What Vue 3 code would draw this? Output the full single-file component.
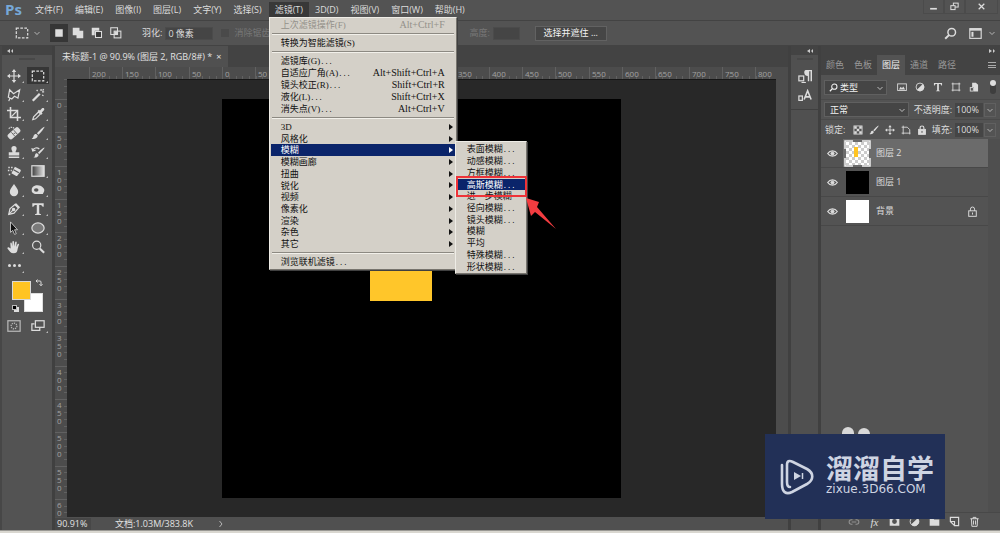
<script setup>
const menusBefore = ['文件(F)', '编辑(E)', '图像(I)', '图层(L)', '文字(Y)', '选择(S)']
const menusAfter = ['3D(D)', '视图(V)', '窗口(W)', '帮助(H)']

const filterCommands = [
  { label: '滤镜库(G)', keys: '' },
  { label: '自适应广角(A)', keys: 'Alt+Shift+Ctrl+A' },
  { label: '镜头校正(R)', keys: 'Shift+Ctrl+R' },
  { label: '液化(L)', keys: 'Shift+Ctrl+X' },
  { label: '消失点(V)', keys: 'Alt+Ctrl+V' },
]
const filterGroups = ['3D', '风格化', '模糊', '模糊画廊', '扭曲', '锐化', '视频', '像素化', '渲染', '杂色', '其它']
const blurs = [
  { label: '表面模糊', dots: true },
  { label: '动感模糊', dots: true },
  { label: '方框模糊', dots: true },
  { label: '高斯模糊', dots: true, active: true },
  { label: '进一步模糊' },
  { label: '径向模糊', dots: true },
  { label: '镜头模糊', dots: true },
  { label: '模糊' },
  { label: '平均' },
  { label: '特殊模糊', dots: true },
  { label: '形状模糊', dots: true },
]

const F = 'fill="currentColor"'
const FN = 'fill="currentColor" stroke="none"'
const icons = {
  move: `<path d="M8 2v12M2 8h12"/><path ${FN} d="M8 0l2.6 3.4H5.4zM8 16l2.6-3.4H5.4zM0 8l3.4-2.6v5.2zM16 8l-3.4-2.6v5.2z"/>`,
  marquee: '<rect x="1.5" y="2.5" width="13" height="11" stroke-dasharray="3 1.6"/>',
  lasso: '<path d="M3 2l4.5 4.5L14.5 2 12.5 11.5 8.5 9.5 5.5 12.5 1.5 10.5zM3.5 11.5L2 15"/>',
  wand: `<path stroke-width="2.6" d="M2 14.5L10 6.5"/><path d="M11.5 1v2.4M15 4.5h-2.4M6.5 2.2l1 1.4M14.3 8.8l-1.6-.8M14.6 1.4l-1.4 1.4"/>`,
  crop: '<path stroke-width="1.8" d="M4 0v12h12M0 4h12v12"/><path d="M5 11L12 4"/>',
  dropper: `<path d="M2 14.5l1-3.2 5.6-5.6 2.2 2.2-5.6 5.6z"/><path ${FN} d="M7.5 4.5l1.6-1.4 1.2 1 2-2.4c2-1.6 4 .4 2.2 2.3l-2.2 2.2.9 1.2-1.4 1.5z"/>`,
  heal: `<path d="M2 3c3-3 6-1 7 1" stroke-dasharray="1.5 1"/><rect x="0" y="4.8" width="16" height="7" rx="2.4" ${FN} transform="rotate(-42 8 8.3)"/><path stroke="#535353" stroke-width="1" d="M5 7.200l4 4.600M7.800 4.800l4 4.600M7.600 8.400h1.800"/>`,
  brush: `<path ${FN} d="M15.4.8c.6.6-4.6 7.4-7 9.2L6.8 8.4C8.6 6 14.8.2 15.4.8zM6 9.2l1.7 1.7c0 3-3.7 4.6-7 3.6 2-.8 1.8-2 2.4-3.6.5-1.3 1.7-2 2.9-1.7z"/>`,
  stamp: `<path ${FN} d="M5 4a3 3 0 116 0c0 1.8-1.2 2.6-1.2 4.4H14V12H2V8.400h4.200C6.200 6.600 5 5.800 5 4zM2 13.200h12v1.600H2z"/>`,
  history: `<path ${FN} d="M15.400 2.800c.6.600-3.600 5.600-6 7.400L8 8.800c1.800-2.400 6.800-6.600 7.400-6zM7.200 9.600l1.500 1.500c0 2.600-3 3.800-6 3 2-.8 1.500-2 2-3.100.5-1.100 1.500-1.600 2.500-1.400z"/><path d="M2 6.500C3 3 7 2.400 9.500 4.500M1 3.500l1 3.400 3.200-1"/>`,
  eraser: `<path ${FN} d="M9 3l6 3.200c.8.500 1 1.200.6 2L12 13c-.5.700-1.300.8-2 .400L5 10.500z"/><path stroke="#535353" d="M7.500 6.500l6 3.500"/><path stroke-dasharray="1.700 1.500" stroke-width="1.800" d="M1.500 4h6M1 7.500h4.500M2 12h3"/>`,
  gradient: '<defs><linearGradient id="toolGradient"><stop offset="0" stop-color="#3c3c3c"/><stop offset="1" stop-color="#e4e4e4"/></linearGradient></defs><rect x="1" y="2" width="14" height="12" fill="url(#toolGradient)"/>',
  drop: `<path ${FN} d="M8 1c2.500 4 4.800 6 4.800 9.200a4.800 4.800 0 01-9.600 0C3.200 7 5.500 5 8 1z"/>`,
  sponge: `<path ${FN} d="M2 4.500C5 1.500 12 2 14.800 6.500c1.200 2-.3 4.500-1.300 6H9.500C5 13 .8 12 .8 8.500c0-1.700.2-3 1.200-4z"/><ellipse cx="6" cy="8" rx="2.600" ry="2" fill="#535353" stroke="none"/>`,
  pen: `<path d="M2 14.200l1.400-6.400L9 3l4 4-5 5.700z"/><path d="M9.500 2l4.700 4.600" stroke-width="2"/><path d="M2.500 13.500l4-4"/><circle cx="7.500" cy="8.500" r="1.300" ${F}/>`,
  type: `<path ${FN} d="M1.500 1.500h13v4h-1.300c-.3-1.700-.9-2.200-3.800-2.200v9.400c0 .9.500 1 1.900 1.100v1H4.700v-1c1.400-.1 1.900-.2 1.900-1.100V3.300c-2.900 0-3.500.5-3.800 2.200H1.500z"/>`,
  arrow: '<path fill="#111" stroke="#ddd" stroke-width=".9" d="M4 1l8 9H8.600l2 4.500-2 .8-2-4.600L4 13z"/>',
  ellipse: '<ellipse cx="8" cy="8" rx="7" ry="5.800" fill="#7a7a7a"/>',
  hand: `<path ${FN} d="M4.200 9.800L3.800 4c-.1-1.300 1.500-1.400 1.700-.1l.6 3.600L6.200 2c0-1.300 1.700-1.300 1.800 0l.4 5.300 1-4.900c.3-1.200 1.900-.9 1.700.400L10.500 8l1.700-3.300c.6-1.100 2-.4 1.500.8-1 2.700-1.300 4-1.800 6.200-.4 2-1.400 3.500-4.300 3.500-3.500 0-4.500-2.200-6.900-5.300-.8-1.200.7-2.100 1.700-1.200z"/>`,
  zoom: '<circle cx="6.500" cy="6" r="4.700"/><path stroke-width="2.400" d="M10 9.700l5 5"/>',
  search: '<circle cx="9.500" cy="6.500" r="4.700" stroke-width="1.800"/><path stroke-width="2.400" d="M6 10l-4.500 4.500"/>',
  chevron: '<path d="M3 6l5 5 5-5"/>',
  solid: `<rect x="3" y="3" width="10" height="10" ${FN}/>`,
  union: `<path ${FN} d="M1 1h9v4h5v10H6v-4H1z"/>`,
  subtract: `<path ${FN} d="M1 1h10v4H5v6H1z"/><rect x="6" y="6" width="8" height="8" fill="#383838"/>`,
  intersect: `<rect x="1" y="1" width="9" height="9"/><rect x="5.500" y="5.500" width="9" height="9"/><rect x="6.500" y="6.500" width="3" height="3" ${F}/>`,
  workspace: `<rect x="1" y="2" width="14" height="12"/><path d="M1 3.500h14" stroke-width="2"/><rect x="3" y="6" width="2.500" height="6" ${FN}/>`,
  para: `<path ${FN} d="M9 1h7v13h-1.700V2.500h-1.500V14h-1.600V8C6.500 8 6 1 9 1z"/><rect x="1" y="8" width="5.500" height="5.500"/><path d="M4 15.500h5"/>`,
  char: `<path stroke-width="1.800" d="M7 12L11 2l4 10M8.500 9h5"/><rect x="1" y="8" width="4" height="5"/>`,
  image: `<rect x="1" y="3" width="14" height="10.500"/><path ${FN} d="M3 12l3-4.500 2 2.500 2-3 3 5z"/>`,
  adjust: `<circle cx="8" cy="8" r="6.300"/><path ${FN} d="M12.500 3.500A6.300 6.300 0 013.500 12.500z"/><path ${FN} d="M3.500 12.500a6.300 6.300 0 009-9z"/>`,
  shape: `<path d="M3 1v14M13 1v14M1 3h14M1 13h14"/>`,
  smart: `<path ${FN} d="M5 1h6l3.500 3.500V15H8V8H5z"/><rect x="2" y="9" width="5" height="5.500"/>`,
  checker: `<rect x="1.500" y="1.500" width="13" height="13"/><path ${FN} d="M2 2h4v4H2zM10 2h4v4h-4zM6 6h4v4H6zM2 10h4v4H2zM10 10h4v4h-4z"/>`,
  artboard: `<path d="M3.500 1v14M1 3.500h9l4 4V15M1 13h14"/>`,
  lock: `<rect x="2.500" y="7" width="11" height="8" ${F}/><path stroke-width="1.800" d="M5 7V4.500a3 3 0 016 0V7"/><path stroke="#444" d="M8 9.500v3"/>`,
  lockOpen: `<rect x="2.500" y="7" width="11" height="8"/><path d="M5 7V4.500a3 3 0 016 0V7M8 9.500v3"/>`,
  eye: `<path stroke-width="1.800" d="M1 8c3.500-5.300 10.500-5.300 14 0-3.500 5.300-10.500 5.300-14 0z"/><circle cx="8" cy="8" r="2.300" ${F}/>`,
  link: '<path d="M6 5H4.500a3 3 0 000 6H6M10 5h1.500a3 3 0 010 6H10M5 8h6"/>',
  mask: `<path ${FN} fill-rule="evenodd" d="M1 2h14v12H1zM8 4.500a3.500 3.500 0 100 7 3.500 3.500 0 000-7z"/>`,
  folder: `<path ${FN} d="M1 3h5l1.500 2H15v9H1z"/>`,
  newLayer: '<path stroke-width="1.700" d="M2 2h12v12H8V8H2zM8 14L2 8"/>',
  trash: '<path d="M2 4h12M6 4V2h4v2M3.500 4l.7 11h7.600l.7-11M6.500 6.500v6M9.500 6.500v6"/>',
  quickMask: '<rect x="1" y="2" width="14" height="12"/><circle cx="8" cy="8" r="3.300" stroke-dasharray="1.500 1"/>',
  screen: '<rect x="5" y="2" width="10" height="7.500"/><path d="M4 5.500H1V13h9v-3"/>',
  swap: '<path stroke-width="2" d="M2 4h8a2 2 0 012 2v7M5 1L2 4l3 3M9 10.500l3 3 3-3"/>',
  minimize: '<path stroke-width="3" d="M2 12h12"/>',
  restore: '<rect x="6" y="2" width="8.500" height="7" stroke-width="1.800"/><rect x="1.500" y="6.500" width="7.500" height="7" fill="#535353" stroke-width="1.800"/>',
  close: '<path stroke-width="2.200" d="M3 3l10 10M13 3L3 13"/>',
}

const tools = [
  ['move', '移动'], ['marquee', '矩形选框'], ['lasso', '多边形套索'], ['wand', '魔棒'],
  ['crop', '裁剪'], ['dropper', '吸管'], ['heal', '修复画笔'], ['brush', '画笔'],
  ['stamp', '仿制图章'], ['history', '历史记录画笔'], ['eraser', '橡皮擦'], ['gradient', '渐变'],
  ['drop', '模糊'], ['sponge', '海绵'], ['pen', '钢笔'], ['type', '文字'],
  ['arrow', '路径选择'], ['ellipse', '椭圆'], ['hand', '抓手'], ['zoom', '缩放'],
]

// Labels under the open menu are left out.
const step = 100 / 3
const hMarks = Array.from({ length: 21 }, (_, i) => (i - 4) * 50)
  .filter((v) => v <= 50 || v >= 350)
  .map((v) => ({ x: Math.round(155 + (v / 50) * step), text: String(Math.abs(v)) }))
const vMarks = Array.from({ length: 13 }, (_, i) => ({ y: Math.round(20 + i * step), digits: String(i * 50).split('').slice(0, i === 12 ? 2 : 3) }))
const hMinor = Array.from({ length: 106 }, (_, i) => Math.round(22 + (i * step) / 5))
const vMinor = Array.from({ length: 66 }, (_, i) => Math.round(i * step / 5))

const panelTabs = ['颜色', '色板', '图层', '通道', '路径']
const layers = [
  { name: '图层 2', thumb: 'clear', selected: true },
  { name: '图层 1', thumb: 'black' },
  { name: '背景', thumb: 'white', locked: true },
]
</script>

<template>
  <div class="app">
    <header class="menubar">
      <span class="brand">Ps</span>
      <nav class="menus">
        <button v-for="m in menusBefore" :key="m" class="menu-button">{{ m }}</button>
        <div class="menu-open">
          <button class="menu-button current" aria-expanded="true">滤镜(T)</button>
          <div class="popup filter-menu">
            <button class="item" disabled><span>上次滤镜操作(F)</span><kbd>Alt+Ctrl+F</kbd></button>
            <hr />
            <button class="item"><span>转换为智能滤镜(S)</span></button>
            <hr />
            <div class="rows commands">
              <button v-for="c in filterCommands" :key="c.label" class="item">
                <span>{{ c.label }}<span class="dots">...</span></span><kbd>{{ c.keys }}</kbd>
              </button>
            </div>
            <hr />
            <div class="rows groups">
              <div v-for="g in filterGroups" :key="g" class="entry">
                <button class="item has-sub" :class="{ active: g === '模糊' }"><span>{{ g }}</span><i class="tri"></i></button>
                <div v-if="g === '模糊'" class="popup blur-menu">
                  <div class="rows groups">
                    <button v-for="b in blurs" :key="b.label" class="item" :class="{ active: b.active }">
                      <span>{{ b.label }}<span v-if="b.dots" class="dots">...</span></span>
                    </button>
                  </div>
                  <div class="callout"></div>
                  <svg class="pointer" viewBox="0 0 30 32" aria-hidden="true"><path d="M0 0L13 4 11 9 30 31 9 14 5 18z" fill="#f23c40" /></svg>
                </div>
              </div>
            </div>
            <hr />
            <button class="item"><span>浏览联机滤镜<span class="dots">...</span></span></button>
          </div>
        </div>
        <button v-for="m in menusAfter" :key="m" class="menu-button">{{ m }}</button>
      </nav>
      <div class="window-buttons">
        <button aria-label="最小化"><svg class="ic s9" viewBox="0 0 16 16" v-html="icons.minimize"></svg></button>
        <button aria-label="还原"><svg class="ic s9" viewBox="0 0 16 16" v-html="icons.restore"></svg></button>
        <button class="wide" aria-label="关闭"><svg class="ic s9" viewBox="0 0 16 16" v-html="icons.close"></svg></button>
      </div>
    </header>

    <div class="options">
      <button class="tool-preset" aria-label="工具预设">
        <svg class="ic s14" viewBox="0 0 16 16" v-html="icons.marquee"></svg>
        <svg class="ic s8" viewBox="0 0 16 16" v-html="icons.chevron"></svg>
      </button>
      <div class="modes">
        <button class="on" aria-label="新选区"><svg class="ic s12" viewBox="0 0 16 16" v-html="icons.solid"></svg></button>
        <button aria-label="添加到选区"><svg class="ic s12" viewBox="0 0 16 16" v-html="icons.union"></svg></button>
        <button aria-label="从选区减去"><svg class="ic s12" viewBox="0 0 16 16" v-html="icons.subtract"></svg></button>
        <button aria-label="与选区交叉"><svg class="ic s12" viewBox="0 0 16 16" v-html="icons.intersect"></svg></button>
      </div>
      <div class="field feather"><label for="feather">羽化:</label><input id="feather" value="0 像素" /></div>
      <label class="smooth"><input type="checkbox" disabled />消除锯齿</label>
      <div class="field height"><label for="height">高度:</label><input id="height" disabled /></div>
      <button class="select-mask">选择并遮住 ...</button>
      <div class="right-tools">
        <button aria-label="搜索"><svg class="ic s13" viewBox="0 0 16 16" v-html="icons.search"></svg></button>
        <button class="workspace-pick" aria-label="工作区">
          <svg class="ic s13" viewBox="0 0 16 16" v-html="icons.workspace"></svg>
          <svg class="ic s8" viewBox="0 0 16 16" v-html="icons.chevron"></svg>
        </button>
      </div>
    </div>

    <main class="workspace">
      <aside class="toolbox">
        <div class="dock-head"><svg class="collapse" viewBox="0 0 6 4"><path d="M3 0v4L0 2zM6 0v4L4 2z" /></svg></div>
        <div class="grip"></div>
        <div class="tools">
          <button v-for="([key, name], i) in tools" :key="name" :aria-label="name" :class="{ on: key === 'marquee', corner: i < 19 }">
            <svg class="ic s14" viewBox="0 0 16 16" v-html="icons[key]"></svg>
          </button>
          <button class="more corner" aria-label="编辑工具栏"><i></i><i></i><i></i></button>
        </div>
        <div class="swatches">
          <button class="back" aria-label="背景色"></button>
          <button class="fore" aria-label="前景色"></button>
          <button class="swap" aria-label="切换颜色"><svg class="ic s8" viewBox="0 0 16 16" v-html="icons.swap"></svg></button>
          <button class="reset" aria-label="默认颜色"></button>
        </div>
        <div class="tools view-tools">
          <button aria-label="快速蒙版"><svg class="ic s14 dim" viewBox="0 0 16 16" v-html="icons.quickMask"></svg></button>
          <button class="corner" aria-label="屏幕模式"><svg class="ic s14" viewBox="0 0 16 16" v-html="icons.screen"></svg></button>
        </div>
      </aside>

      <section class="document">
        <div class="tabbar"><div class="tab">未标题-1 @ 90.9% (图层 2, RGB/8#) * <button aria-label="关闭文档">×</button></div></div>
        <div class="stage">
          <div class="corner-box"></div>
          <div class="ruler">
            <svg>
              <path v-for="x in hMinor" :key="'m' + x" :d="`M${x} 9v3`" />
              <g v-for="m in hMarks" :key="m.x"><path :d="`M${m.x} 0v12`" /><text :x="m.x + 3" y="10">{{ m.text }}</text></g>
            </svg>
          </div>
          <div class="ruler-end"></div>
          <div class="ruler">
            <svg>
              <path v-for="y in vMinor" :key="'m' + y" :d="`M9 ${y}h3`" />
              <g v-for="m in vMarks" :key="m.y"><path :d="`M0 ${m.y}h12`" /><text v-for="(d, i) in m.digits" :key="i" x="2" :y="m.y + 9 + i * 8">{{ d }}</text></g>
            </svg>
          </div>
          <div class="canvas"><div class="artwork"><div class="square"></div></div></div>
          <div class="scrollbar"></div>
        </div>
        <footer class="status"><span class="zoom-level">90.91%</span><span class="doc-size">文档:1.03M/383.8K</span><svg class="ic s8" viewBox="0 0 16 16"><path d="M5 2l5 6-5 6" /></svg></footer>
      </section>

      <aside class="icon-dock">
        <div class="dock-head end"><svg class="collapse" viewBox="0 0 6 4"><path d="M3 0v4L0 2zM6 0v4L4 2z" /></svg></div>
        <div class="grip"></div>
        <div class="dock-icons">
          <button aria-label="段落"><svg class="ic s14" viewBox="0 0 16 16" v-html="icons.para"></svg></button>
          <button aria-label="字符"><svg class="ic s14" viewBox="0 0 16 16" v-html="icons.char"></svg></button>
        </div>
      </aside>

      <aside class="panels">
        <div class="dock-head end"><svg class="collapse" viewBox="0 0 6 4"><path d="M0 0v4l3-2zM4 0v4l2-2z" /></svg></div>
        <div class="panel-tabs">
          <button v-for="t in panelTabs" :key="t" :class="{ on: t === '图层' }">{{ t }}</button>
          <button class="burger" aria-label="面板菜单"><i></i></button>
        </div>
        <div class="control-row">
          <div class="pick kind">
            <svg class="ic s9 lens" viewBox="0 0 16 16" v-html="icons.search"></svg>
            <select aria-label="滤镜类型"><option>类型</option></select>
            <svg class="ic s8 caret" viewBox="0 0 16 16" v-html="icons.chevron"></svg>
          </div>
          <div class="icon-set kinds">
            <button v-for="k in ['image', 'adjust', 'type', 'shape', 'smart']" :key="k" :aria-label="k"><svg class="ic s10" viewBox="0 0 16 16" v-html="icons[k]"></svg></button>
          </div>
          <button class="toggle" aria-label="打开图层过滤"></button>
        </div>
        <div class="control-row ruled">
          <div class="pick blend">
            <select aria-label="混合模式"><option>正常</option></select>
            <svg class="ic s8 caret" viewBox="0 0 16 16" v-html="icons.chevron"></svg>
          </div>
          <div class="percent">
            <label for="opacity">不透明度:</label><input id="opacity" value="100%" />
            <button aria-label="不透明度滑块"><svg class="ic s8" viewBox="0 0 16 16" v-html="icons.chevron"></svg></button>
          </div>
        </div>
        <div class="control-row ruled">
          <span class="lock-label">锁定:</span>
          <div class="icon-set locks">
            <button v-for="k in ['checker', 'brush', 'move', 'artboard', 'lock']" :key="k" :aria-label="'锁定 ' + k"><svg class="ic s10" viewBox="0 0 16 16" v-html="icons[k]"></svg></button>
          </div>
          <div class="percent">
            <label for="fill">填充:</label><input id="fill" value="100%" />
            <button aria-label="填充滑块"><svg class="ic s8" viewBox="0 0 16 16" v-html="icons.chevron"></svg></button>
          </div>
        </div>
        <ul class="layers">
          <li v-for="l in layers" :key="l.name" :class="{ selected: l.selected }">
            <button class="eye" aria-label="可见性"><svg class="ic s11" viewBox="0 0 16 16" v-html="icons.eye"></svg></button>
            <div class="layer-body">
              <div class="thumb" :class="l.thumb">
                <svg v-if="l.selected" class="bracket" viewBox="0 0 27 27"><path d="M1 9V1h8M18 1h8v8M26 18v8h-8M9 26H1v-8" /></svg>
                <i v-if="l.selected"></i>
              </div>
              <span class="layer-name">{{ l.name }}</span>
              <svg v-if="l.locked" class="ic s11 layer-lock" viewBox="0 0 16 16" v-html="icons.lockOpen"></svg>
            </div>
          </li>
        </ul>
        <div class="panel-space"></div>
        <div class="layer-actions">
          <button class="faint" aria-label="链接图层"><svg class="ic s12" viewBox="0 0 16 16" v-html="icons.link"></svg></button>
          <button class="fx" aria-label="图层样式">fx</button>
          <button v-for="k in ['mask', 'adjust', 'folder', 'newLayer', 'trash']" :key="k" :aria-label="k"><svg class="ic s11" viewBox="0 0 16 16" v-html="icons[k]"></svg></button>
        </div>
      </aside>
    </main>
    <div class="bottom-edge"></div>

    <div class="watermark">
      <i class="ear"></i><i class="ear second"></i>
      <svg class="play" viewBox="0 0 34 36" aria-hidden="true">
        <g fill="none" stroke="#ced4e2" stroke-width="2.600" stroke-linecap="round" stroke-linejoin="round">
          <path d="M2 6v19c0 8 4 11 10 8l15-8c7-4 7-11 0-15L13 3C9 1 7 2 7 6v17c0 4 1 5 3 5" />
        </g>
        <path d="M14 13l7 4-7 4z" fill="#ced4e2" /><path d="M22.500 14v6" stroke="#ced4e2" stroke-width="1.500" />
      </svg>
      <div class="wm-text"><strong>溜溜自学</strong><span>zixue.3D66.COM</span></div>
    </div>
  </div>
</template>

<style>
html, body { margin: 0; background: #535353; }
</style>

<style scoped>
* { box-sizing: border-box; }
.app { position: relative; display: flex; flex-direction: column; height: 100vh; min-width: 720px; overflow: hidden; background: #535353; color: #dcdcdc; font: 9px/12px "Open Sans", "Noto Sans CJK SC", sans-serif; }
button, input, select { font: inherit; color: inherit; border: 0; padding: 0; margin: 0; background: none; border-radius: 0; outline: 0; }
button { display: flex; align-items: center; justify-content: center; }
.ic { display: block; flex: none; fill: none; stroke: currentColor; stroke-width: 1.4; }
.s8 { width: 8px; height: 8px; } .s9 { width: 9px; height: 9px; } .s10 { width: 10px; height: 10px; }
.s11 { width: 11px; height: 11px; } .s12 { width: 12px; height: 12px; } .s13 { width: 13px; height: 13px; } .s14 { width: 14px; height: 14px; }
.dim { opacity: .75; }

.menubar { display: flex; align-items: flex-start; height: 20px; flex: none; }
.brand { width: 29px; padding-left: 5px; color: #76a8d8; font: bold 15px/18px "Open Sans", sans-serif; }
.menus { display: flex; position: relative; z-index: 5; padding-top: 2px; }
.menu-button { height: 15px; padding: 0 6px; white-space: nowrap; }
.menu-button.current { background: #383838; }
.menu-open { position: relative; margin-left: 1px; }
.popup { position: absolute; background: #d4d0c8; color: #111; border: 1px solid #eeece6; border-right-color: #77746e; border-bottom-color: #77746e; box-shadow: 1px 1px 0 #404040; font-family: "Liberation Serif", "Noto Sans CJK SC", serif; }
.filter-menu { left: 0; top: 15px; width: 188px; padding: 1px; }
.item { display: flex; align-items: center; justify-content: space-between; width: 100%; height: 12px; line-height: 12px; padding: 0 10px; white-space: nowrap; text-align: left; }
.item:disabled { color: #93908a; }
.item kbd { font: 10px/12px "Liberation Serif", serif; }
.item.has-sub { padding-right: 2px; }
.item.active { background: #0a246a; color: #fff; }
.dots { font: 7px/7px "Liberation Mono", monospace; }
.tri { border: 3px solid transparent; border-left: 4px solid currentColor; border-right: 0; }
.filter-menu hr { margin: 2px 1px; height: 2px; border: 0; border-top: 1px solid #8c8982; border-bottom: 1px solid #f2f0ea; }
.rows { display: grid; grid-auto-rows: minmax(0, 1fr); }
.rows .item { height: 100%; }
.commands { height: 60px; } .groups { height: 129px; }
.entry { position: relative; }
.blur-menu { left: 184px; top: -3px; width: 72px; padding: 1px; }
.callout { position: absolute; left: 0; top: 34px; width: 71px; height: 21px; border: 2px solid #ee3338; }
.pointer { position: absolute; left: 70px; top: 56px; width: 30px; height: 32px; }
.window-buttons { display: flex; margin-left: auto; padding-right: 2px; }
.window-buttons button { width: 21px; height: 14px; border: 1px solid #4b4b4b; border-top: 0; }
.window-buttons .wide { width: 33px; }

.options { display: flex; align-items: center; height: 26px; flex: none; border-top: 1px solid #434343; border-bottom: 1px solid #434343; }
.tool-preset { gap: 4px; padding-left: 15px; width: 50px; justify-content: flex-start; }
.modes { display: flex; gap: 1px; width: 92px; }
.modes button { width: 18px; height: 18px; }
.modes .on { background: #363636; }
.field { display: flex; align-items: center; gap: 3px; }
.field input { height: 13px; width: 48px; background: #454545; padding: 0 2px; border: 1px solid #4b4b4b; }
.smooth { display: flex; align-items: center; gap: 5px; margin-left: 8px; color: #777; }
.smooth input { appearance: none; width: 8px; height: 8px; background: #4a4a4a; }
.height { margin-left: 199px; color: #777; }
.height input { width: 27px; }
.select-mask { height: 15px; width: 72px; margin-left: 15px; background: #464646; border: 1px solid #626262; color: #f2f2f2; white-space: nowrap; }
.right-tools { display: flex; margin-left: auto; gap: 12px; padding-right: 4px; }
.workspace-pick { gap: 6px; }

.workspace { display: flex; flex: 1; min-height: 0; background: #404040; }
.dock-head { display: flex; align-items: center; height: 9px; padding: 0 5px; background: #434343; flex: none; }
.dock-head.end { justify-content: flex-end; }
.collapse { width: 6px; height: 4px; fill: #ccc; }
.grip { height: 11px; flex: none; display: flex; justify-content: center; padding-top: 3px; }
.grip::before { content: ""; width: 16px; height: 2px; background: #484848; }
.toolbox { width: 52px; border-left: 2px solid #474747; background: #535353; flex: none; }
.tools { display: grid; grid-template-columns: 24px 24px; grid-auto-rows: 19px; place-items: center; }
.tools button { position: relative; width: 22px; height: 17px; }
.tools .on { background: #363636; }
.corner::after { content: ""; position: absolute; right: 1px; bottom: 1px; border: 1px solid #bbb; border-top-color: transparent; border-left-color: transparent; }
.more { gap: 2px; }
.more i { width: 3px; height: 3px; border-radius: 50%; background: #ddd; }
.swatches { position: relative; height: 41px; margin-top: 1px; }
.swatches button { position: absolute; }
.fore { left: 10px; top: 5px; width: 19px; height: 19px; background: #ffc423; border: 1px solid #d9d9d9; }
.back { left: 22px; top: 17px; width: 19px; height: 19px; background: #fff; border: 1px solid #ddd; }
.swap { left: 33px; top: 3px; }
.reset { left: 10px; top: 29px; width: 5px; height: 5px; background: #000; border: 1px solid #bbb; box-shadow: 2px 2px 0 #ddd; }
.view-tools { margin-top: -1px; }

.document { display: flex; flex-direction: column; flex: 1; min-width: 0; padding: 0 3px; }
.tabbar { height: 21px; flex: none; background: #434343; }
.tab { display: flex; align-items: center; width: max-content; height: 21px; padding: 0 7px; gap: 4px; background: #505050; white-space: nowrap; color: #e2e2e2; }
.stage { display: grid; grid-template: 12px 1fr / 12px 1fr 12px; flex: 1; min-height: 0; background: #4c4c4c; }
.ruler { position: relative; overflow: hidden; }
.ruler svg { position: absolute; inset: 0; width: 100%; height: 100%; stroke: #616161; shape-rendering: crispEdges; }
.ruler text { stroke: none; fill: #a2a2a2; font: 8px "Open Sans", sans-serif; }
.canvas { display: grid; place-items: center; background: #282828; overflow: hidden; border-top: 1px solid #171717; }
.artwork { position: relative; width: 399px; height: 399px; background: #000; }
.square { position: absolute; left: 148px; top: 141px; width: 62px; height: 61px; background: #ffc62a; }
.status { display: flex; align-items: center; height: 13px; flex: none; background: #505050; color: #e2e2e2; }
.zoom-level { width: 36px; padding-left: 2px; background: #474747; }
.doc-size { width: 102px; margin-left: 24px; }

.icon-dock { display: flex; flex-direction: column; width: 27px; background: #505050; flex: none; }
.dock-icons { display: grid; grid-auto-rows: 20px; place-items: center; padding-bottom: 3px; border-bottom: 1px solid #404040; }
.panels { display: flex; flex-direction: column; width: 179px; margin-left: 3px; background: #535353; flex: none; }
.panel-tabs { display: flex; height: 20px; flex: none; background: #434343; color: #999; }
.panel-tabs button { width: 28px; }
.panel-tabs .on { background: #535353; color: #f0f0f0; }
.panel-tabs .burger { width: 16px; margin-left: auto; }
.burger i { width: 8px; height: 6px; border-top: 1px solid #aaa; border-bottom: 1px solid #aaa; background: linear-gradient(#aaa, #aaa) center / 8px 1px no-repeat; }
.control-row { display: flex; align-items: center; height: 20px; padding: 0 4px 0 3px; flex: none; }
.panel-tabs + .control-row { height: 24px; }
.control-row.ruled { border-top: 1px solid #4a4a4a; }
.pick { position: relative; height: 15px; background: #454545; border: 1px solid #606060; color: #f2f2f2; }
.pick select { appearance: none; width: 100%; height: 13px; padding-left: 5px; line-height: 13px; }
.pick .lens { position: absolute; left: 4px; top: 2px; }
.pick .caret { position: absolute; right: 2px; top: 3px; }
.kind { width: 63px; } .kind select { padding-left: 15px; }
.blend { width: 85px; }
.icon-set { display: flex; gap: 8px; }
.kinds { margin-left: 10px; }
.toggle { width: 6px; height: 14px; margin-left: auto; background: #3e3e3e; border-radius: 3px; }
.toggle::before { content: ""; width: 6px; height: 6px; margin-bottom: 8px; border-radius: 50%; background: #ddd; }
.percent { display: flex; align-items: center; margin-left: auto; white-space: nowrap; }
.percent input { width: 28px; height: 14px; margin-left: 3px; padding-left: 1px; background: #454545; }
.percent button { width: 12px; height: 14px; margin-left: 1px; border: 1px solid #606060; }
.lock-label { width: 29px; padding-left: 1px; }
.locks { gap: 6px; }
.layers { list-style: none; margin: 0; padding: 0 12px 0 0; background: #4f4f4f; flex: none; }
.layers li { display: flex; height: 29px; border-bottom: 1px solid #484848; background: #535353; }
.eye { width: 22px; }
.layer-body { display: flex; align-items: center; flex: 1; padding: 0 10px 0 3px; }
.selected .layer-body { background: #6b6b6b; }
.thumb { position: relative; width: 23px; height: 23px; }
.thumb.black { background: #000; } .thumb.white { background: #fff; }
.thumb.clear { background: conic-gradient(#ccc 25%, #fff 0 50%, #ccc 0 75%, #fff 0) 0 0 / 6px 6px; }
.thumb i { position: absolute; left: 8px; top: 5px; width: 4px; height: 10px; background: #ffc423; }
.bracket { position: absolute; left: -2px; top: -2px; width: 27px; height: 27px; fill: none; stroke: #eee; stroke-width: 1.5; }
.layer-name { margin-left: 7px; }
.layer-lock { margin-left: auto; }
.panel-space { flex: 1; border-right: 12px solid #4f4f4f; }
.layer-actions { display: flex; align-items: center; justify-content: flex-end; height: 18px; gap: 9px; padding-right: 20px; border-top: 1px solid #484848; flex: none; }
.faint { opacity: .45; }
.fx { font: italic 11px/12px "Liberation Serif", serif; width: 11px; }
.bottom-edge { height: 3px; flex: none; background: #d9d7d0; border-top: 1px solid #9a9994; }

.watermark { position: absolute; right: 55px; bottom: 14px; z-index: 6; width: 180px; height: 85px; display: flex; align-items: center; gap: 12px; padding-left: 15px; background: #223057; color: #ced4e2; }
.play { width: 34px; height: 36px; flex: none; }
.wm-text { display: flex; flex-direction: column; white-space: nowrap; padding-bottom: 4px; }
.wm-text strong { font: 700 27px/28px "Noto Sans CJK SC", sans-serif; }
.wm-text span { font: 12px/14px "DejaVu Sans", sans-serif; }
.ear { position: absolute; left: 77px; top: -7px; width: 12px; height: 7px; border-radius: 6px 6px 0 0; background: #d8d8d8; }
.ear.second { left: 93px; top: -6px; height: 6px; }
</style>
